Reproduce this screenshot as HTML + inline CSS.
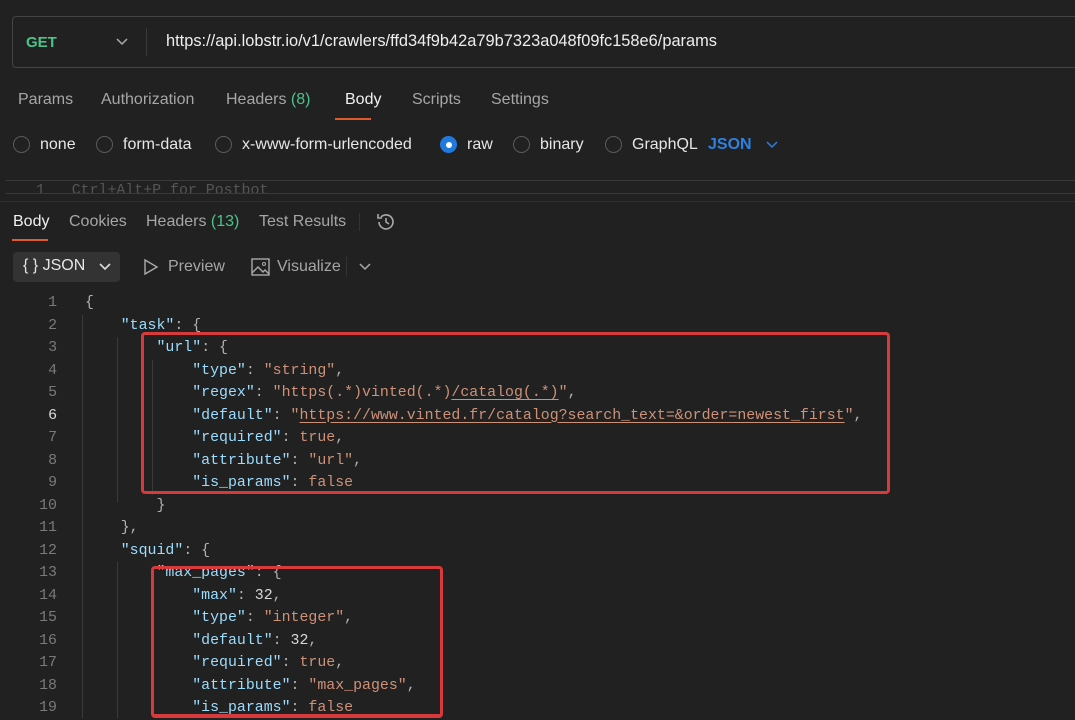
<!DOCTYPE html>
<html><head><meta charset="utf-8"><style>
*{margin:0;padding:0;box-sizing:border-box}
body{width:1075px;height:718px;background:#212121;overflow:hidden;position:relative;font-family:"Liberation Sans",sans-serif;color:#e6e6e6}
.abs{position:absolute;white-space:nowrap}
.urlbox{left:12px;top:16px;width:1080px;height:52px;border:1px solid #444;border-radius:4px;background:#212121}
.tab{font-size:16px;color:#a6a6a6}
.radio{width:17px;height:17px;border:1.5px solid #5a5a5a;border-radius:50%}
.code{font-family:"Liberation Mono",monospace;font-size:14.9px;line-height:22.5px}
.ln{color:#7a7a7a;text-align:right;width:57px;left:0}
.k{color:#9cdcfe}.s{color:#ce9178}.p{color:#b0b0b0}.n{color:#d8d8d8}.u{text-decoration:underline;text-underline-offset:3px}
.guide{position:absolute;width:1px;background:#3a3a3a}
.red{position:absolute;border:3px solid #d63a3c;border-radius:4px}
</style></head><body>
<div class="abs urlbox"></div>
<div class="abs" style="left:26px;top:34px;font-size:15px;font-weight:bold;color:#4cc38a">GET</div>
<svg class="abs" style="left:116px;top:38px" width="12" height="8"><path d="M1 1l5 5 5-5" stroke="#aaa" stroke-width="1.5" fill="none"/></svg>
<div class="abs" style="left:146px;top:28px;width:1px;height:28px;background:#3a3a3a"></div>
<div class="abs" style="left:166px;top:32px;font-size:16.4px;color:#eee">https://api.lobstr.io/v1/crawlers/ffd34f9b42a79b7323a048f09fc158e6/params</div>

<div class="abs tab" style="left:18px;top:91px">Params</div>
<div class="abs tab" style="left:101px;top:91px">Authorization</div>
<div class="abs tab" style="left:226px;top:91px">Headers <span style="color:#4cc38a">(8)</span></div>
<div class="abs tab" style="left:345px;top:91px;color:#f0f0f0">Body</div>
<div class="abs" style="left:335px;top:118px;width:36px;height:2px;background:#e05a2b"></div>
<div class="abs tab" style="left:412px;top:91px">Scripts</div>
<div class="abs tab" style="left:491px;top:91px">Settings</div>

<div class="abs radio" style="left:13px;top:136px"></div><div class="abs tab" style="left:40px;top:136px;color:#e6e6e6">none</div>
<div class="abs radio" style="left:96px;top:136px"></div><div class="abs tab" style="left:123px;top:136px;color:#e6e6e6">form-data</div>
<div class="abs radio" style="left:215px;top:136px"></div><div class="abs tab" style="left:242px;top:136px;color:#e6e6e6">x-www-form-urlencoded</div>
<div class="abs" style="left:440px;top:136px;width:17px;height:17px;border-radius:50%;background:#1f7ae0"><div style="margin:5.5px;width:6px;height:6px;border-radius:50%;background:#fff"></div></div><div class="abs tab" style="left:467px;top:136px;color:#e6e6e6">raw</div>
<div class="abs radio" style="left:513px;top:136px"></div><div class="abs tab" style="left:540px;top:136px;color:#e6e6e6">binary</div>
<div class="abs radio" style="left:605px;top:136px"></div><div class="abs tab" style="left:632px;top:136px;color:#e6e6e6">GraphQL</div>
<div class="abs" style="left:708px;top:136px;font-size:16px;font-weight:bold;color:#2f80e0">JSON</div>
<svg class="abs" style="left:766px;top:141px" width="12" height="8"><path d="M1 1l5 5 5-5" stroke="#2f80e0" stroke-width="1.5" fill="none"/></svg>

<div class="abs" style="left:6px;top:180px;width:1075px;height:1px;background:#3a3a3a"></div>
<div class="abs code" style="left:36px;top:182px;color:#555;height:11px;overflow:hidden;line-height:18px">1&nbsp;&nbsp;&nbsp;Ctrl+Alt+P for Postbot</div>
<div class="abs" style="left:6px;top:193px;width:1075px;height:1px;background:#3a3a3a"></div>
<div class="abs" style="left:0;top:201px;width:1075px;height:1px;background:#2e2e2e"></div>

<div class="abs tab" style="left:13px;top:213px;color:#f0f0f0">Body</div>
<div class="abs" style="left:12px;top:239px;width:36px;height:2px;background:#e05a2b"></div>
<div class="abs tab" style="left:69px;top:213px">Cookies</div>
<div class="abs tab" style="left:146px;top:213px">Headers <span style="color:#4cc38a">(13)</span></div>
<div class="abs tab" style="left:259px;top:213px">Test Results</div>
<div class="abs" style="left:359px;top:213px;width:1px;height:18px;background:#333"></div>
<svg class="abs" style="left:375px;top:211px" width="22" height="22" viewBox="0 0 22 22"><path d="M4 11a7 7 0 1 0 2-5" stroke="#aaa" stroke-width="1.6" fill="none"/><path d="M3 3v4h4" stroke="#aaa" stroke-width="1.6" fill="none"/><path d="M11 7v4l3 2" stroke="#aaa" stroke-width="1.6" fill="none"/></svg>

<div class="abs" style="left:13px;top:252px;width:107px;height:30px;background:#333;border-radius:4px"></div>
<div class="abs" style="left:23px;top:257px;font-size:16px;color:#e6e6e6">{ }&nbsp;JSON</div>
<svg class="abs" style="left:99px;top:263px" width="12" height="8"><path d="M1 1l5 5 5-5" stroke="#ddd" stroke-width="1.6" fill="none"/></svg>
<svg class="abs" style="left:143px;top:258px" width="16" height="18"><path d="M2 2l12 7-12 7z" stroke="#aaa" stroke-width="1.4" fill="none"/></svg>
<div class="abs tab" style="left:168px;top:258px">Preview</div>
<svg class="abs" style="left:251px;top:258px" width="19" height="18"><rect x="1" y="1" width="17" height="16" stroke="#aaa" stroke-width="1.4" fill="none"/><path d="M1 15l6-6 5 5 2-2 4 4" stroke="#aaa" stroke-width="1.4" fill="none"/><circle cx="13" cy="6" r="1.5" stroke="#aaa" fill="none"/></svg>
<div class="abs tab" style="left:277px;top:258px">Visualize</div>
<div class="abs" style="left:346px;top:257px;width:1px;height:20px;background:#333"></div>
<svg class="abs" style="left:359px;top:263px" width="12" height="8"><path d="M1 1l5 5 5-5" stroke="#aaa" stroke-width="1.5" fill="none"/></svg>

<div class="guide" style="left:82px;top:315px;height:403px"></div>
<div class="guide" style="left:117px;top:337px;height:165px"></div>
<div class="guide" style="left:117px;top:562px;height:156px"></div>
<div class="guide" style="left:152px;top:360px;height:135px"></div>

<div class="abs code ln" style="top:292px">1<br>2<br>3<br>4<br>5<br><span style="color:#ddd">6</span><br>7<br>8<br>9<br>10<br>11<br>12<br>13<br>14<br>15<br>16<br>17<br>18<br>19</div>
<div class="abs code" style="left:85px;top:292px;color:#d4d4d4"><pre style="font:inherit"><span class="p">{</span>
    <span class="k">"task"</span><span class="p">: {</span>
        <span class="k">"url"</span><span class="p">: {</span>
            <span class="k">"type"</span><span class="p">: </span><span class="s">"string"</span><span class="p">,</span>
            <span class="k">"regex"</span><span class="p">: </span><span class="s">"https(.*)vinted(.*)<span class="u">/catalog(.*)</span>"</span><span class="p">,</span>
            <span class="k">"default"</span><span class="p">: </span><span class="s">"<span class="u">https://www.vinted.fr/catalog?search_text=&amp;order=newest_first</span>"</span><span class="p">,</span>
            <span class="k">"required"</span><span class="p">: </span><span class="s">true</span><span class="p">,</span>
            <span class="k">"attribute"</span><span class="p">: </span><span class="s">"url"</span><span class="p">,</span>
            <span class="k">"is_params"</span><span class="p">: </span><span class="s">false</span>
        <span class="p">}</span>
    <span class="p">},</span>
    <span class="k">"squid"</span><span class="p">: {</span>
        <span class="k">"max_pages"</span><span class="p">: {</span>
            <span class="k">"max"</span><span class="p">: </span><span class="n">32</span><span class="p">,</span>
            <span class="k">"type"</span><span class="p">: </span><span class="s">"integer"</span><span class="p">,</span>
            <span class="k">"default"</span><span class="p">: </span><span class="n">32</span><span class="p">,</span>
            <span class="k">"required"</span><span class="p">: </span><span class="s">true</span><span class="p">,</span>
            <span class="k">"attribute"</span><span class="p">: </span><span class="s">"max_pages"</span><span class="p">,</span>
            <span class="k">"is_params"</span><span class="p">: </span><span class="s">false</span></pre></div>

<div class="red" style="left:141px;top:332px;width:749px;height:162px"></div>
<div class="red" style="left:151px;top:566px;width:292px;height:152px;border-bottom-width:4px"></div>
</body></html>
